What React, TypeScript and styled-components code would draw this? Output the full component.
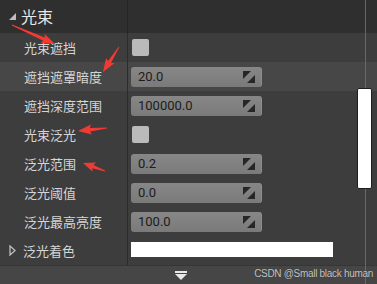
import React from "react";
import styled, { createGlobalStyle } from "styled-components";

const Global = createGlobalStyle`
  html, body { margin: 0; padding: 0; background: #3d3d3d; }
  body { width: 377px; height: 284px; overflow: hidden; font-family: "Noto Sans CJK SC", "Noto Sans", sans-serif; }
`;

const Panel = styled.div`
  position: relative;
  width: 377px;
  height: 284px;
  display: flex;
  flex-direction: column;
  background: #3d3d3d;
`;

const Header = styled.div`
  height: 33px;
  display: grid;
  grid-template-columns: 127px 1px 1fr;
  background: #2f2f2f;
`;

const HeaderLabel = styled.div`
  display: flex;
  align-items: center;
  gap: 5px;
  padding-left: 9px;
  font-size: 16px;
  color: #e8e8e8;
  padding-bottom: 1px;
`;

const Row = styled.div<{ $hl?: boolean }>`
  height: 29px;
  display: grid;
  grid-template-columns: 127px 1px 1fr;
  background: ${(p) => (p.$hl ? "#474747" : "#3d3d3d")};
`;

const Label = styled.div<{ $indent?: number }>`
  display: flex;
  align-items: center;
  gap: 7px;
  padding-left: ${(p) => p.$indent ?? 24}px;
  font-size: 13px;
  color: #d6d6d6;
  white-space: nowrap;
`;

const Divider = styled.div<{ $dark?: boolean }>`
  background: ${(p) => (p.$dark ? "#262626" : "#2c2c2c")};
`;

const Value = styled.div`
  display: flex;
  align-items: center;
  padding-left: 3px;
`;

const Check = styled.div`
  width: 17px;
  height: 17px;
  margin-left: 1px;
  border-radius: 2px;
  background: #bababa;
`;

const NumBox = styled.div`
  width: 131px;
  height: 20px;
  box-sizing: border-box;
  border-radius: 3px;
  background: linear-gradient(#878787, #7a7a7a);
  border-right: 1px solid #8e8e8e;
  display: flex;
  align-items: center;
  justify-content: space-between;
  padding: 0 6px 0 7px;
  font-family: Roboto, "Liberation Sans", sans-serif;
  font-size: 13px;
  color: #1c1c1c;
`;

const ColorBar = styled.div`
  width: 202px;
  height: 15px;
  background: #ffffff;
  margin-top: -3px;
`;

const Bottom = styled.div`
  flex: 1;
  background: #464646;
  border-top: 1px solid #363636;
  display: flex;
  align-items: center;
  padding-left: 175px;
`;

const Track = styled.div`
  position: absolute;
  top: 0;
  left: 365px;
  width: 1px;
  height: 284px;
  background: #686868;
`;

const Thumb = styled.div`
  position: absolute;
  left: 357px;
  top: 88px;
  width: 15px;
  height: 101px;
  box-sizing: border-box;
  background: #ffffff;
  border: 1px solid #1e1e1e;
  border-radius: 2px;
`;

const Watermark = styled.div`
  position: absolute;
  right: 4px;
  bottom: 5px;
  font-family: "Liberation Sans", Arial, sans-serif;
  font-size: 10px;
  letter-spacing: -0.3px;
  color: #c4c4c4;
  text-shadow: 0 0 1px #2a2a2a;
`;

const Overlay = styled.svg`
  position: absolute;
  left: 0;
  top: 0;
  pointer-events: none;
`;

const SpinIcon = () => (
  <svg width="12" height="12" viewBox="0 0 12 12">
    <polygon points="0,0 8,0 0,8" fill="#262626" />
    <polygon points="12,4 12,12 4,12" fill="#262626" />
  </svg>
);

const Num = ({ v }: { v: string }) => (
  <NumBox>
    <span>{v}</span>
    <SpinIcon />
  </NumBox>
);

function arrow(tx: number, ty: number, hx: number, hy: number) {
  const dx = hx - tx;
  const dy = hy - ty;
  const len = Math.hypot(dx, dy);
  const ux = dx / len;
  const uy = dy / len;
  const px = -uy;
  const py = ux;
  const headLen = Math.min(12, len * 0.45);
  const bx = hx - ux * headLen;
  const by = hy - uy * headLen;
  const w0 = 0.4;
  const w1 = 1.8;
  const wh = 5;
  const pts = [
    [tx + px * w0, ty + py * w0],
    [bx + px * w1, by + py * w1],
    [bx + px * wh - ux * 1.5, by + py * wh - uy * 1.5],
    [hx, hy],
    [bx - px * wh - ux * 1.5, by - py * wh - uy * 1.5],
    [bx - px * w1, by - py * w1],
    [tx - px * w0, ty - py * w0],
  ];
  return pts.map((p) => p.map((n) => n.toFixed(1)).join(",")).join(" ");
}

const rows: { label: string; kind: "check" | "num" | "color"; v?: string; hl?: boolean }[] = [
  { label: "光束遮挡", kind: "check" },
  { label: "遮挡遮罩暗度", kind: "num", v: "20.0", hl: true },
  { label: "遮挡深度范围", kind: "num", v: "100000.0" },
  { label: "光束泛光", kind: "check" },
  { label: "泛光范围", kind: "num", v: "0.2" },
  { label: "泛光阈值", kind: "num", v: "0.0" },
  { label: "泛光最高亮度", kind: "num", v: "100.0" },
];

export default function App() {
  return (
    <>
      <Global />
      <Panel>
        <Header>
          <HeaderLabel>
            <svg width="7" height="7" viewBox="0 0 7 7">
              <polygon points="7,0 7,7 0,7" fill="#bdbdbd" />
            </svg>
            光束
          </HeaderLabel>
          <Divider $dark />
          <div />
        </Header>
        {rows.map((r) => (
          <Row key={r.label} $hl={r.hl}>
            <Label>{r.label}</Label>
            <Divider />
            <Value>{r.kind === "check" ? <Check /> : <Num v={r.v!} />}</Value>
          </Row>
        ))}
        <Row>
          <Label $indent={9}>
            <svg width="7" height="11" viewBox="0 0 7 11">
              <polygon points="1,1 6,5.5 1,10" fill="none" stroke="#bdbdbd" strokeWidth="1.3" />
            </svg>
            泛光着色
          </Label>
          <Divider />
          <Value>
            <ColorBar />
          </Value>
        </Row>
        <Bottom>
          <svg width="12" height="9" viewBox="0 0 12 9">
            <rect x="0" y="0" width="12" height="2" fill="#e8e8e8" />
            <polygon points="0,3 12,3 6,9" fill="#e8e8e8" />
          </svg>
        </Bottom>
        <Track />
        <Thumb />
        <Watermark>CSDN @Small black human</Watermark>
        <Overlay width="377" height="284" viewBox="0 0 377 284">
          <g fill="#f23a35">
            <polygon points={arrow(12, 25, 55, 44)} />
            <polygon points={arrow(119, 47, 103, 72)} />
            <polygon points={arrow(107, 128, 78, 131)} />
            <polygon points={arrow(105, 171, 83, 163)} />
          </g>
        </Overlay>
      </Panel>
    </>
  );
}
